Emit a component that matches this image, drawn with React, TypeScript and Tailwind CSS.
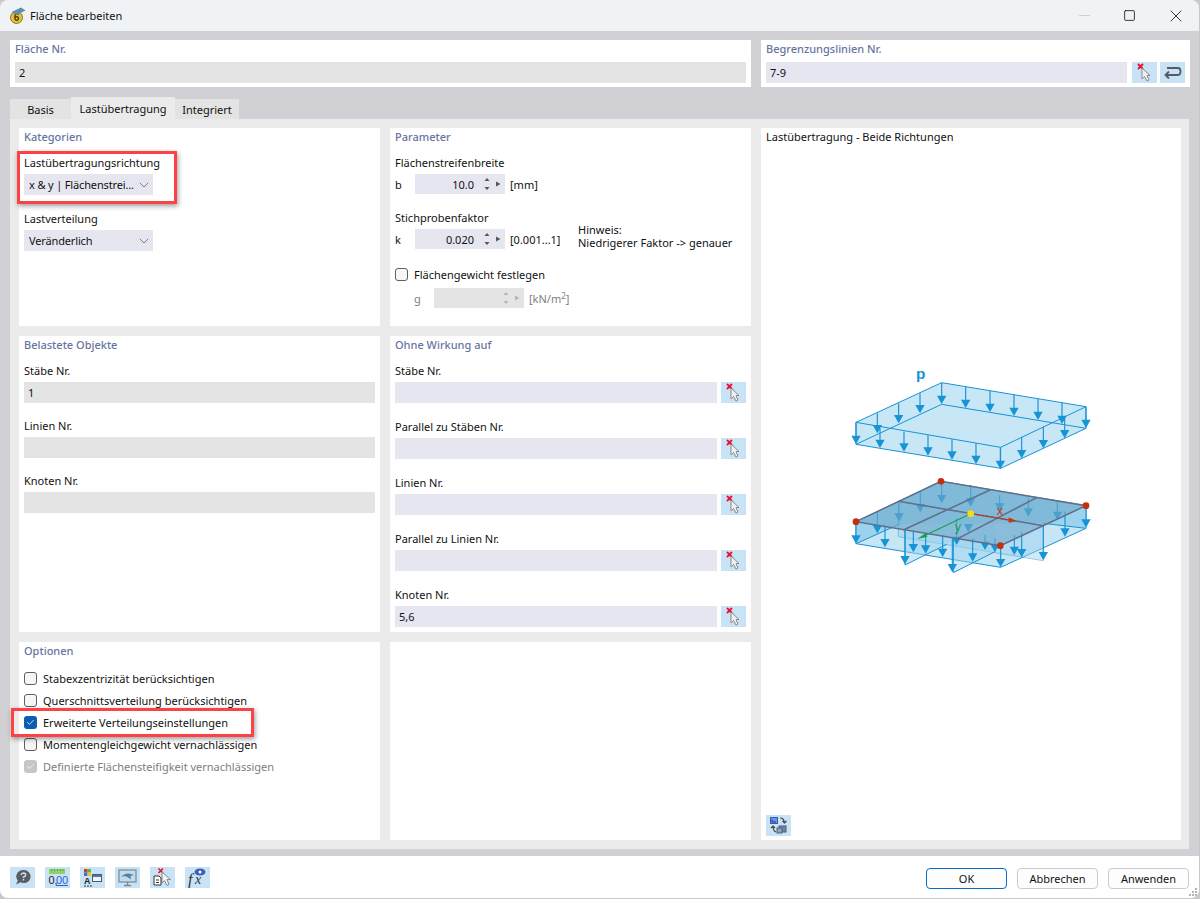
import { type ReactNode } from 'react'
import { ChevronDown, Check, Minus, Square, X } from 'lucide-react'

const STROKE = '#1794d5'

function Arrow({ x, y1, y2, color = STROKE }: { x: number; y1: number; y2: number; color?: string }) {
  return (
    <g>
      <line x1={x} y1={y1} x2={x} y2={y2 - 8} stroke={color} strokeWidth={3.5} />
      <polygon points={`${x - 14},${y2 - 25} ${x + 14},${y2 - 25} ${x},${y2}`} fill={color} />
    </g>
  )
}

const TOP_ARROWS = [
  [78, 187, 252], [142, 160, 220], [206, 130, 190], [270, 100, 160], [335, 68, 132], [407, 80, 144], [480, 92, 156],
  [552, 104, 168], [624, 116, 180], [696, 128, 192], [768, 140, 204], [150, 205, 264], [222, 215, 275], [294, 226, 287],
  [366, 238, 299], [438, 250, 312], [511, 262, 327], [575, 230, 295], [640, 200, 265], [704, 170, 235],
]

const LOW_ARROWS = [
  [78, 485, 551], [142, 455, 520], [207, 425, 485], [271, 395, 457], [335, 365, 430], [422, 375, 440], [509, 405, 455],
  [595, 415, 470], [682, 425, 480], [768, 437, 503], [165, 495, 562], [225, 510, 613], [250, 515, 577], [287, 520, 581],
  [338, 525, 591], [367, 535, 637], [380, 475, 555], [415, 495, 517], [428, 535, 605], [465, 525, 570], [495, 535, 577],
  [512, 557, 622], [553, 525, 585], [575, 515, 592], [640, 497, 601], [705, 455, 530],
]

/** Load-transfer sketch: loaded slab above, meshed plate with its strips below. */
function LoadDiagram() {
  return (
    <svg viewBox="0 0 810 660" width={270} height={220} className="block">
      {/* upper slab */}
      <polygon points="78,187 335,68 768,140 768,205 512,325 78,253" fill="#c8e7f6" stroke={STROKE} strokeWidth={3} />
      <polyline points="78,253 335,133 768,205" fill="none" stroke={STROKE} strokeWidth={3} />
      <polyline points="78,187 512,262 768,140" fill="none" stroke={STROKE} strokeWidth={3} />
      <line x1={512} y1={262} x2={512} y2={325} stroke={STROKE} strokeWidth={3} />
      {TOP_ARROWS.map(([x, a, b]) => (
        <Arrow key={`${x}-${a}`} x={x} y1={a} y2={b} />
      ))}
      <text x={258} y={58} fontFamily="'Liberation Sans', sans-serif" fontWeight={700} fontSize={46} fill={STROKE}>
        p
      </text>

      {/* lower slab and the strips sticking out of it */}
      <polygon points="78,551 512,622 768,505 768,437 333,364 78,485" fill="#c6e6f6" stroke={STROKE} strokeWidth={3} />
      <polygon points="78,485 78,551 210,492 640,490 768,505 768,437 333,364" fill="#9bd2ee" />
      <polyline points="78,551 210,492" fill="none" stroke={STROKE} strokeWidth={3} />
      <polyline points="640,490 768,505" fill="none" stroke={STROKE} strokeWidth={3} />
      <polygon points="205,424 205,530 640,602 640,497" fill="#9bd2ee" opacity={0.45} stroke={STROKE} strokeWidth={3} />
      <polygon points="225,512 225,615 370,540 370,470" fill="#9bd2ee" opacity={0.5} />
      <polygon points="370,533 370,638 495,575 495,470" fill="#9bd2ee" opacity={0.5} />
      <polyline points="225,512 225,615 350,553" fill="none" stroke={STROKE} strokeWidth={3} />
      <polyline points="370,533 370,638 495,575" fill="none" stroke={STROKE} strokeWidth={3} />

      {/* plate */}
      {LOW_ARROWS.map(([x, a, b]) => (
        <Arrow key={`${x}-${a}`} x={x} y1={a} y2={b} />
      ))}
      <polygon points="78,485 333,364 768,437 511,557" fill="#6fa8cc" opacity={0.6} />
      <g fill="none" stroke="#5f6f8a" strokeWidth={4.5}>
        <polygon points="78,485 333,364 768,437 511,557" />
        <line x1={205} y1={424} x2={640} y2={497} />
        <line x1={480} y1={390} x2={220} y2={510} />
        <line x1={620} y1={413} x2={385} y2={535} />
      </g>
      <line x1={422} y1={461} x2={275} y2={531} stroke="#17a04a" strokeWidth={3.5} />
      <polygon points="262,537 288,518 292,530" fill="#17a04a" />
      <line x1={422} y1={461} x2={540} y2={480} stroke="#c8340e" strokeWidth={3.5} strokeDasharray="12 3" />
      <polygon points="560,483 536,472 536,488" fill="#c8340e" />
      <text x={500} y={465} fontFamily="'Liberation Sans', sans-serif" fontSize={38} fill="#c8340e">x</text>
      <text x={374} y={514} fontFamily="'Liberation Sans', sans-serif" fontSize={38} fill="#17a04a">y</text>
      {[[78, 485], [333, 364], [768, 437], [511, 557]].map(([x, y]) => (
        <circle key={x} cx={x} cy={y} r={10} fill="#c5300c" />
      ))}
      <circle cx={422} cy={461} r={10} fill="#f7de10" />
    </svg>
  )
}

function PickIcon() {
  return (
    <svg viewBox="0 0 25 21" width={25} height={21}>
      <path d="M6 2 L11 7 M11 2 L6 7" stroke="#e8112d" strokeWidth={1.8} />
      <path d="M10 6 V17 L12.5 14.5 L15 19 L17 18 L15 13.5 L18 13.5 Z" fill="#eef0f2" stroke="#8b8b8b" strokeWidth={1} />
    </svg>
  )
}

function ReturnIcon() {
  return (
    <svg viewBox="0 0 25 21" width={25} height={21} fill="none" stroke="#555a62" strokeWidth={1.8}>
      <path d="M7 6 H18 Q20.5 6 20.5 9.5 Q20.5 13 18 13 H6" />
      <path d="M9 9.5 L5.5 13 L9 16.5" />
    </svg>
  )
}

function IconButton({ children }: { children: ReactNode }) {
  return <div className="flex h-[21px] w-[25px] shrink-0 items-center justify-center bg-[#c8e2f6]">{children}</div>
}

function SectionTitle({ children }: { children: ReactNode }) {
  return <div className="h-[18px] text-[11px] leading-[18px] font-medium text-[#66759f]">{children}</div>
}

function Label({ children }: { children: ReactNode }) {
  return <div className="h-[18px] leading-[18px]">{children}</div>
}

function TextBox({ value, disabled, className = '' }: { value?: string; disabled?: boolean; className?: string }) {
  return (
    <div className={`flex h-[21px] items-center px-[4px] ${disabled ? 'bg-[#e4e4e4]' : 'bg-[#e6e6f0]'} ${className}`}>{value}</div>
  )
}

function Select({ value }: { value: string }) {
  return (
    <div className="flex h-[21px] w-[129px] items-center justify-between bg-[#e6e6f0] pr-[1px] pl-[5px]">
      <span className="whitespace-nowrap tracking-[-0.15px]">{value}</span>
      <ChevronDown size={16} strokeWidth={1.1} className="shrink-0 text-[#555]" />
    </div>
  )
}

function Spin({ value, disabled }: { value?: string; disabled?: boolean }) {
  const tri = disabled ? '#b5b5b5' : '#555'
  return (
    <div className={`flex h-[20px] w-[90px] items-center justify-end ${disabled ? 'bg-[#e4e4e4]' : 'bg-[#e6e6f0]'}`}>
      <span>{value}</span>
      <svg viewBox="0 0 31 20" width={31} height={20} className="shrink-0">
        <polygon points="10.5,7 15.5,7 13,4" fill={tri} />
        <polygon points="10.5,13 15.5,13 13,16" fill={tri} />
        <polygon points="22,7.5 22,12.5 26.5,10" fill={tri} />
      </svg>
    </div>
  )
}

function Box({ checked, disabled }: { checked?: boolean; disabled?: boolean }) {
  if (disabled)
    return (
      <div className="flex h-[13px] w-[13px] shrink-0 items-center justify-center rounded-[3px] bg-[#c6c6c6]">
        <Check size={9} strokeWidth={2} className="text-white" />
      </div>
    )
  if (checked)
    return (
      <div className="flex h-[13px] w-[13px] shrink-0 items-center justify-center rounded-[3px] bg-[#0a5db3]">
        <Check size={9} strokeWidth={2} className="text-white" />
      </div>
    )
  return <div className="h-[13px] w-[13px] shrink-0 rounded-[3px] border border-[#5f5f5f] bg-[#f6f6f6]" />
}

function Option({ label, checked, disabled }: { label: string; checked?: boolean; disabled?: boolean }) {
  return (
    <div className={`flex h-[22px] items-center gap-[6px] ${disabled ? 'text-[#7d7d7d]' : ''}`}>
      <Box checked={checked} disabled={disabled} />
      <span>{label}</span>
    </div>
  )
}

function PickField({ label, value, gap }: { label: string; value?: string; gap: string }) {
  return (
    <div className={gap}>
      <Label>{label}</Label>
      <div className="mt-[2px] flex gap-[4px]">
        <TextBox value={value} className="flex-1" />
        <IconButton>
          <PickIcon />
        </IconButton>
      </div>
    </div>
  )
}

function Panel({ children, className = '' }: { children?: ReactNode; className?: string }) {
  return <section className={`bg-white px-[5px] ${className}`}>{children}</section>
}

function FooterIcon({ children }: { children: ReactNode }) {
  return <div className="flex h-[21px] w-[25px] items-center justify-center bg-[#c8e2f6]">{children}</div>
}

function DialogButton({ label, primary }: { label: string; primary?: boolean }) {
  return (
    <div
      className={`flex h-[21px] w-[81px] items-center justify-center rounded-[4px] border bg-[#fdfdfd] ${
        primary ? 'border-[#0a6cc4]' : 'border-[#c6ccd2]'
      }`}
    >
      {label}
    </div>
  )
}

export default function App() {
  return (
    <div className="h-[899px] w-[1200px] overflow-hidden bg-[#c9c9c9] text-[11px] leading-none text-[#111] [font-family:'Noto_Sans',sans-serif]">
      <div className="relative flex h-[898px] w-[1199px] flex-col overflow-hidden rounded-[8px] bg-[#d1d0d5]">
        {/* title bar */}
        <header className="flex h-[31px] shrink-0 items-center bg-[#eff3f6] pl-[9px]">
          <svg viewBox="0 0 17 17" width={17} height={17}>
            <circle cx={7.5} cy={10.5} r={6} fill="#e9c32f" stroke="#6d5a14" strokeWidth={0.8} />
            <text x={7.5} y={14} textAnchor="middle" fontSize={10} fontWeight={700} fill="#443a10" fontFamily="'Liberation Sans', sans-serif">
              6
            </text>
            <polygon points="2.5,5 12,0.5 16.5,3.5 7.5,8" fill="#5f8db5" />
          </svg>
          <span className="ml-[4px]">Fläche bearbeiten</span>
          <div className="ml-auto flex items-center">
            <Minus size={17} strokeWidth={0.9} className="mr-[30px] text-[#b9b9b9]" />
            <Square size={13} strokeWidth={1.5} className="mr-[30px] text-[#111]" />
            <X size={20} strokeWidth={1} className="mr-[13px] text-[#111]" />
          </div>
        </header>

        <div className="flex flex-1 flex-col px-[10px] pt-[9px] pb-[7px]">
          {/* number row */}
          <div className="grid grid-cols-[741px_429px] gap-[10px]">
            <div className="h-[47px] bg-white px-[5px]">
              <SectionTitle>Fläche Nr.</SectionTitle>
              <TextBox value="2" disabled className="mt-[4px] h-[20px]" />
            </div>
            <div className="h-[47px] bg-white px-[5px]">
              <SectionTitle>Begrenzungslinien Nr.</SectionTitle>
              <div className="mt-[4px] flex gap-[3px]">
                <TextBox value="7-9" className="mr-[2px] flex-1" />
                <IconButton>
                  <PickIcon />
                </IconButton>
                <IconButton>
                  <ReturnIcon />
                </IconButton>
              </div>
            </div>
          </div>

          {/* tabs */}
          <nav className="mt-[10px] flex h-[22px] items-end">
            <div className="flex h-[20px] w-[61px] items-center justify-center bg-[#e3e3e3]">Basis</div>
            <div className="flex h-[22px] w-[104px] items-center justify-center bg-[#ebebeb]">Lastübertragung</div>
            <div className="flex h-[20px] w-[64px] items-center justify-center bg-[#e3e3e3]">Integriert</div>
          </nav>

          <div className="grid flex-1 grid-cols-[361px_361px_420px] grid-rows-[198px_296px_198px] gap-[10px] bg-[#ebebeb] px-[9px] py-[9px]">
            <Panel>
              <SectionTitle>Kategorien</SectionTitle>
              <div className="mt-[8px]">
                <Label>Lastübertragungsrichtung</Label>
                <div className="mt-[2px]">
                  <Select value="x & y | Flächenstrei..." />
                </div>
              </div>
              <div className="mt-[15px]">
                <Label>Lastverteilung</Label>
                <div className="mt-[2px]">
                  <Select value="Veränderlich" />
                </div>
              </div>
            </Panel>

            <Panel>
              <SectionTitle>Parameter</SectionTitle>
              <div className="mt-[8px]">
                <Label>Flächenstreifenbreite</Label>
                <div className="mt-[2px] flex items-center">
                  <span className="w-[20px]">b</span>
                  <Spin value="10.0" />
                  <span className="ml-[5px]">[mm]</span>
                </div>
              </div>
              <div className="mt-[15px]">
                <Label>Stichprobenfaktor</Label>
                <div className="mt-[2px] flex items-center">
                  <span className="w-[20px]">k</span>
                  <Spin value="0.020" />
                  <span className="ml-[5px] w-[68px]">[0.001...1]</span>
                  <span className="mt-[-6px] leading-[13px]">
                    Hinweis:
                    <br />
                    Niedrigerer Faktor -&gt; genauer
                  </span>
                </div>
              </div>
              <div className="mt-[16px] flex h-[18px] items-center gap-[6px]">
                <Box />
                <span>Flächengewicht festlegen</span>
              </div>
              <div className="mt-[5px] flex items-center pl-[19px] text-[#7d7d7d]">
                <span className="w-[20px]">g</span>
                <Spin disabled />
                <span className="ml-[5px]">
                  [kN/m<sup className="text-[8px]">2</sup>]
                </span>
              </div>
            </Panel>

            <section className="row-span-3 flex flex-col bg-white pb-[4px] pl-[5px]">
              <div className="h-[18px] leading-[18px]">Lastübertragung - Beide Richtungen</div>
              <div className="mt-[214px] ml-[64px]">
                <LoadDiagram />
              </div>
              <div className="mt-auto">
                <IconButton>
                  <svg viewBox="0 0 25 21" width={25} height={21}>
                    <rect x={4.5} y={2.5} width={7} height={6} fill="#6f94ea" stroke="#3559b5" />
                    <path d="M6 7 V4.5 M6 7 H10" stroke="#1f3a80" />
                    <rect x={13} y={11} width={7} height={6} fill="#6f8aa6" stroke="#48617b" />
                    <rect x={11} y={13} width={5} height={5} fill="#8fa6bc" stroke="#48617b" />
                    <path d="M14 3 Q18 3 18.5 8 M16.5 6 L18.5 8 L20.5 6" fill="none" stroke="#444" strokeWidth={1.1} />
                    <path d="M7 11 Q7 16 10 17 M5 13 L7 11 L9 13" fill="none" stroke="#444" strokeWidth={1.1} />
                  </svg>
                </IconButton>
              </div>
            </section>

            <Panel>
              <SectionTitle>Belastete Objekte</SectionTitle>
              <div className="mt-[8px]">
                <Label>Stäbe Nr.</Label>
                <TextBox value="1" disabled className="mt-[2px]" />
              </div>
              <div className="mt-[14px]">
                <Label>Linien Nr.</Label>
                <TextBox disabled className="mt-[2px]" />
              </div>
              <div className="mt-[14px]">
                <Label>Knoten Nr.</Label>
                <TextBox disabled className="mt-[2px]" />
              </div>
            </Panel>

            <Panel>
              <SectionTitle>Ohne Wirkung auf</SectionTitle>
              <PickField label="Stäbe Nr." gap="mt-[8px]" />
              <PickField label="Parallel zu Stäben Nr." gap="mt-[15px]" />
              <PickField label="Linien Nr." gap="mt-[15px]" />
              <PickField label="Parallel zu Linien Nr." gap="mt-[15px]" />
              <PickField label="Knoten Nr." value="5,6" gap="mt-[15px]" />
            </Panel>

            <Panel>
              <SectionTitle>Optionen</SectionTitle>
              <div className="mt-[7px]">
                <Option label="Stabexzentrizität berücksichtigen" />
                <Option label="Querschnittsverteilung berücksichtigen" />
                <Option label="Erweiterte Verteilungseinstellungen" checked />
                <Option label="Momentengleichgewicht vernachlässigen" />
                <Option label="Definierte Flächensteifigkeit vernachlässigen" disabled />
              </div>
            </Panel>

            <Panel />
          </div>
        </div>

        {/* footer */}
        <footer className="flex h-[44px] shrink-0 items-start justify-between bg-white pt-[11px] pr-[10px] pl-[10px]">
          <div className="flex gap-[10px]">
            <FooterIcon>
              <svg viewBox="0 0 25 21" width={25} height={21}>
                <path d="M13.5 3 a7 6.5 0 1 1 -3 12.3 L6 17.5 L7.8 13.5 A7 6.5 0 0 1 13.5 3Z" fill="#595d63" />
                <path d="M11 8 Q11.5 6 13.5 6 Q15.7 6.2 15.7 8 Q15.7 9.5 13.5 10 V11 M13.5 12 V13.5" fill="none" stroke="#c8e2f6" strokeWidth={1.4} />
              </svg>
            </FooterIcon>
            <FooterIcon>
              <svg viewBox="0 0 25 21" width={25} height={21}>
                <rect x={4} y={2} width={16} height={5} fill="#8fd06a" />
                <path d="M6.5 2 V4 M9.5 2 V4 M12.5 2 V4 M15.5 2 V4 M18 2 V4" stroke="#5f9d44" />
                <text x={3.5} y={16.5} fontSize={11} fill="#222" fontFamily="'Liberation Sans', sans-serif">0,</text>
                <text x={11} y={16.5} fontSize={11} fill="#2c62d8" fontFamily="'Liberation Sans', sans-serif">00</text>
                <line x1={11} y1={18.5} x2={23} y2={18.5} stroke="#2c62d8" />
              </svg>
            </FooterIcon>
            <FooterIcon>
              <svg viewBox="0 0 25 21" width={25} height={21}>
                <rect x={4} y={2} width={3.5} height={3.5} fill="#d83a2a" />
                <rect x={7.5} y={2} width={3.5} height={3.5} fill="#5ab54a" />
                <rect x={4} y={5.5} width={3.5} height={3.5} fill="#3f6fd8" />
                <rect x={7.5} y={5.5} width={3.5} height={3.5} fill="#e8c52f" />
                <text x={4} y={17} fontSize={9} fontWeight={700} fill="#222" fontFamily="'Liberation Sans', sans-serif">A</text>
                <path d="M4 19 H6 M7 19 H9 M10 19 H12" stroke="#333" />
                <rect x={12.5} y={7.5} width={9} height={7} fill="#f3f7fb" stroke="#4a5a6a" />
                <rect x={13} y={8} width={8} height={2} fill="#4a78c0" />
              </svg>
            </FooterIcon>
            <FooterIcon>
              <svg viewBox="0 0 25 21" width={25} height={21}>
                <rect x={4} y={3} width={17} height={12} fill="#c4dbea" stroke="#8794a0" strokeWidth={1.4} />
                <path d="M6 10 Q11 4 19 8 L15.5 9 L16 12.5 L11.5 9.5 Q8 9 6 10Z" fill="#4d84ab" />
                <path d="M12.5 15 V18 M9 18.5 H16" stroke="#7c8a96" strokeWidth={1.4} />
              </svg>
            </FooterIcon>
            <FooterIcon>
              <svg viewBox="0 0 25 21" width={25} height={21}>
                <path d="M8.5 1.5 L13 6 M13 1.5 L8.5 6" stroke="#e8112d" strokeWidth={1.6} />
                <path d="M12 5 V16 L14.5 13.5 L17 18.5 L19 17.5 L17 12.5 L20.5 12.5 Z" fill="#f0f2f4" stroke="#8b8b8b" />
                <path d="M4 9 H9 L11 11 V18 H4Z" fill="#fff" stroke="#333" />
                <path d="M6 13 H9 M6 15.5 H9" stroke="#333" />
              </svg>
            </FooterIcon>
            <FooterIcon>
              <svg viewBox="0 0 25 21" width={25} height={21}>
                <text x={3} y={18} fontSize={16} fontStyle="italic" fill="#333" fontFamily="'Liberation Serif', serif">f</text>
                <text x={10} y={17} fontSize={14} fontStyle="italic" fill="#333" fontFamily="'Liberation Serif', serif">x</text>
                <ellipse cx={15} cy={5} rx={5.5} ry={3.5} fill="#3f5fb5" />
                <circle cx={15} cy={5} r={1.5} fill="#fff" />
              </svg>
            </FooterIcon>
          </div>
          <div className="mt-[1px] flex gap-[10px]">
            <DialogButton label="OK" primary />
            <DialogButton label="Abbrechen" />
            <DialogButton label="Anwenden" />
          </div>
        </footer>

        {/* resize grip */}
        <svg viewBox="0 0 9 9" width={9} height={9} className="absolute right-[1px] bottom-[1px]">
          <path d="M6 0h2v2H6zM3 3h2v2H3zM6 3h2v2H6zM0 6h2v2H0zM3 6h2v2H3zM6 6h2v2H6z" fill="#b4b4b4" />
        </svg>

        {/* red callouts sit over the form */}
        <div className="pointer-events-none absolute top-[151px] left-[17px] h-[53px] w-[160px] border-[3px] border-[#fd4245] shadow-[1px_2px_5px_rgba(0,0,0,0.4)]" />
        <div className="pointer-events-none absolute top-[708px] left-[11px] h-[29px] w-[243px] border-[3px] border-[#fd4245] shadow-[1px_2px_5px_rgba(0,0,0,0.4)]" />
      </div>
    </div>
  )
}
